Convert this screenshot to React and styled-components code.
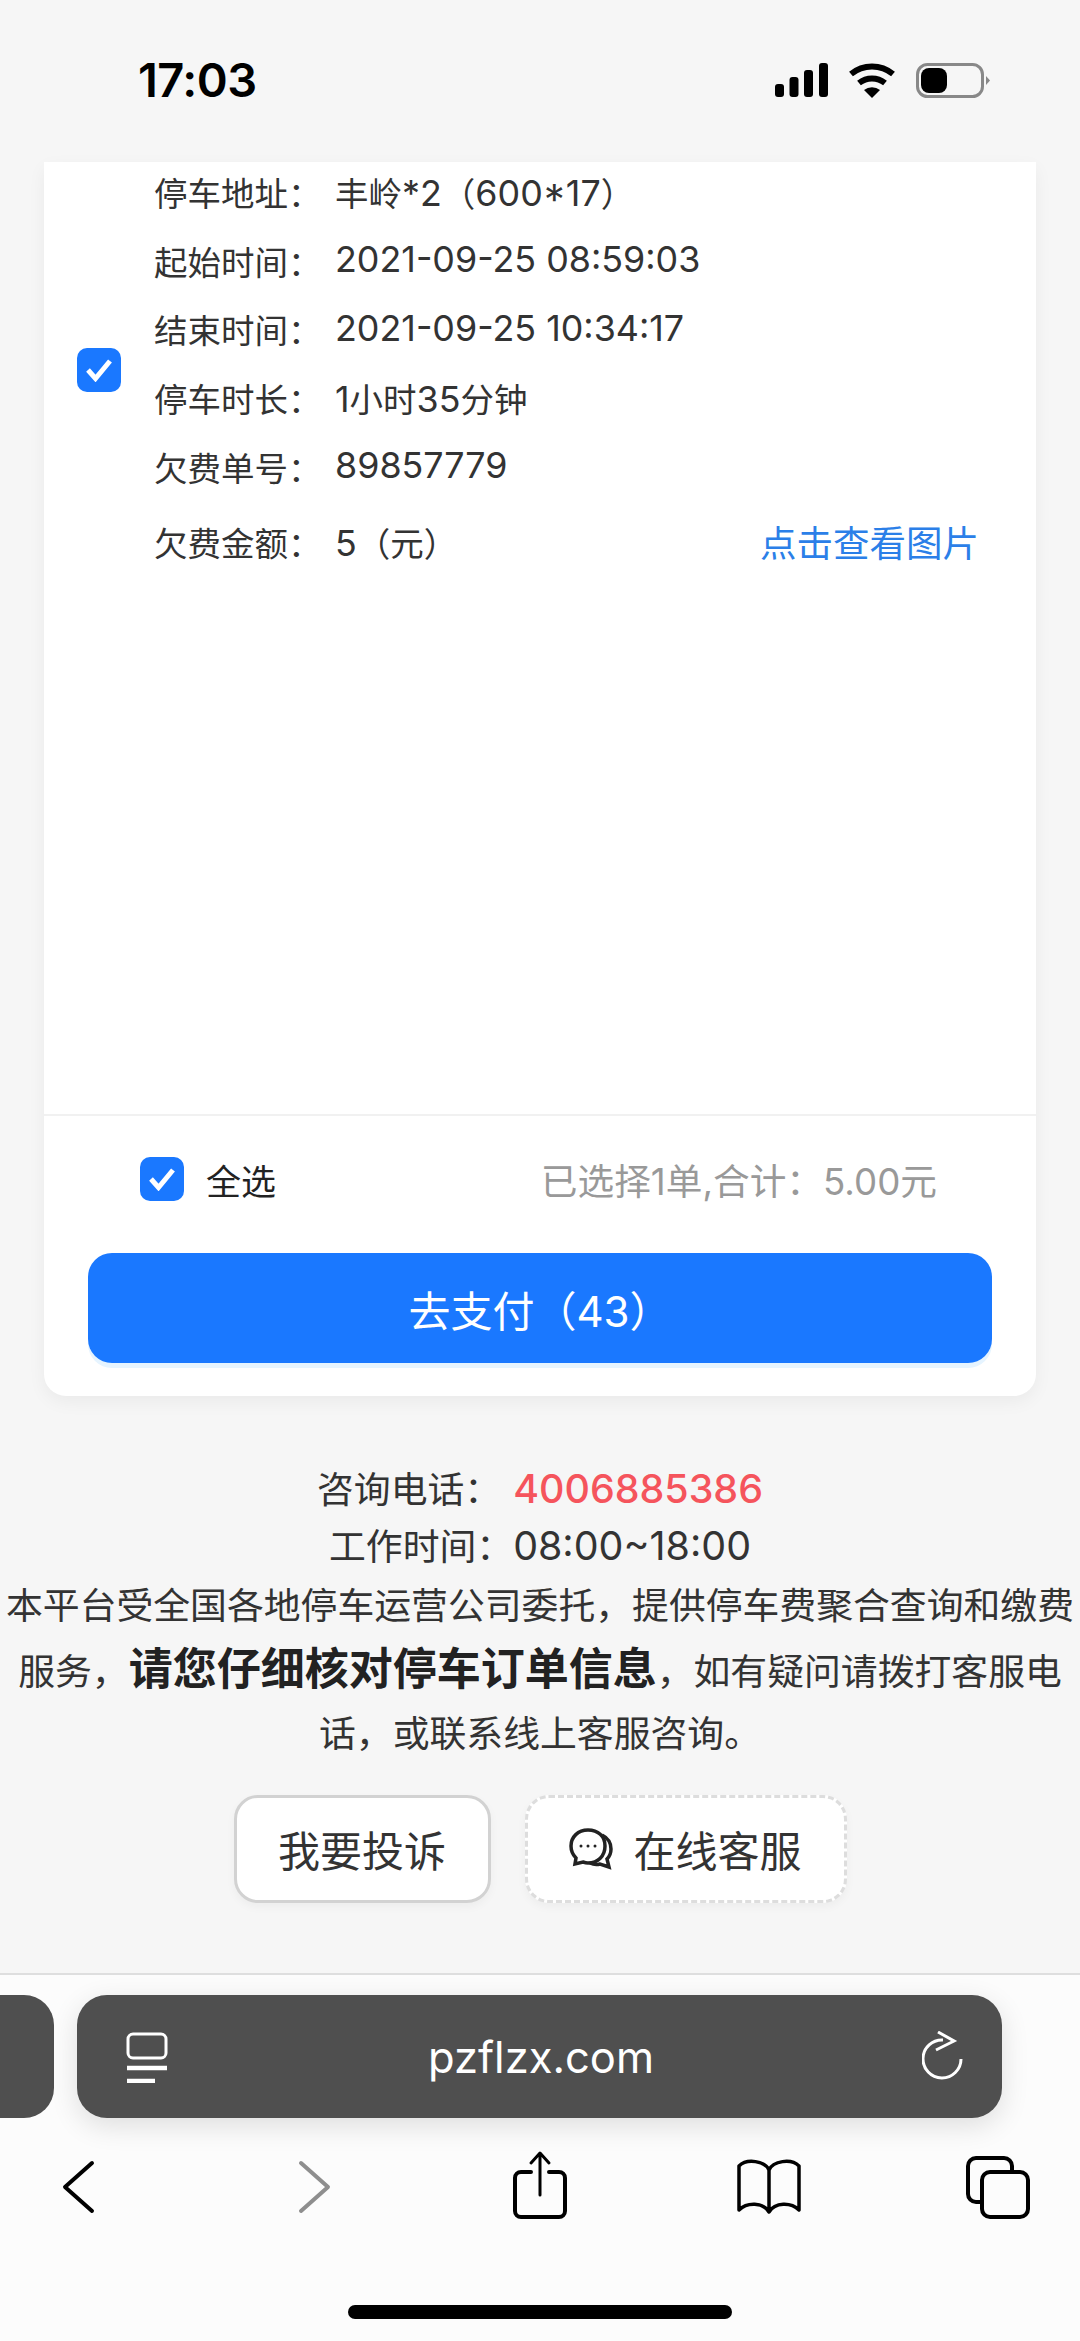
import styled, { createGlobalStyle } from "styled-components";

const GlobalStyle = createGlobalStyle`
  html, body {
    margin: 0;
    padding: 0;
    background: #f6f6f6;
    font-family: Inter, "Noto Sans CJK SC", "Liberation Sans", sans-serif;
  }
  * { box-sizing: border-box; }
`;

const Page = styled.div`
  width: 1080px;
  height: 2341px;
  display: flex;
  flex-direction: column;
  overflow: hidden;
  background: #f6f6f6;
  color: #333;
`;

const StatusBar = styled.div`
  height: 162px;
  flex: none;
  padding: 52px 88px 0 138px;
  display: flex;
  justify-content: space-between;
  align-items: flex-start;
`;

const Clock = styled.div`
  font-size: 47px;
  line-height: 56px;
  font-weight: 600;
  color: #000;
  letter-spacing: -0.5px;
`;

const StatusSvg = styled.svg`
  margin-top: 8px;
`;

const Card = styled.section`
  height: 1234px;
  flex: none;
  margin: 0 44px;
  padding-bottom: 33px;
  background: #fff;
  border-radius: 0 0 22px 22px;
  box-shadow: 0 6px 18px rgba(0, 0, 0, 0.05);
  display: flex;
  flex-direction: column;
`;

const Order = styled.div`
  flex: 1;
  display: flex;
  align-items: flex-start;
  padding-left: 33px;
  border-bottom: 2px solid #f1f1f1;
`;

const OrderBody = styled.div`
  flex: 1;
  display: flex;
  align-items: center;
  margin-top: -5px;
`;

const Details = styled.div`
  flex: 1;
  padding: 0 57px 0 33px;
`;

const Row = styled.div`
  display: flex;
  align-items: center;
  height: ${(p) => (p.$last ? 82 : 68.7)}px;
  font-size: 33.5px;
  color: #333;
`;

const Label = styled.span`
  width: 181px;
  flex: none;
`;

const Value = styled.span`
  flex: 1;
`;

// digits and latin run a bit larger than the chinese text around them
const Num = styled.span`
  font-size: 1.07em;
  line-height: 1;
`;

const Link = styled.a`
  font-size: 36.5px;
  color: #2b7fe8;
`;

const Box = styled.span`
  width: 44px;
  height: 44px;
  flex: none;
  border-radius: 10px;
  background: #1a78ff;
  display: flex;
  align-items: center;
  justify-content: center;
`;

const Summary = styled.div`
  height: 126px;
  flex: none;
  padding: 0 99px 0 96px;
  display: flex;
  align-items: center;
  gap: 22px;
`;

const AllLabel = styled.span`
  font-size: 35px;
  color: #222;
  flex: 1;
`;

const Total = styled.span`
  font-size: 36.7px;
  color: #999;
`;

const PayButton = styled.button`
  display: block;
  flex: none;
  width: 904px;
  height: 110px;
  margin: 11px auto 0;
  border: 0;
  border-radius: 24px;
  background: #1a78ff;
  box-shadow: 0 5px 0 #e6f4ff;
  color: #fff;
  font: inherit;
  font-size: 42px;
`;

const Info = styled.main`
  flex: 1;
  padding: 65px 5px 0;
  text-align: center;
  font-size: 36.85px;
  color: #333;
`;

const Contact = styled.div`
  line-height: 57px;
`;

const Phone = styled(Num)`
  color: #f5545c;
  font-weight: 500;
  margin-left: 12px;
`;

const Notice = styled.p`
  margin: 0;
  line-height: 62.5px;
`;

const Strong = styled.strong`
  font-size: 44px;
  font-weight: 700;
  color: #222;
`;

const Actions = styled.div`
  display: flex;
  justify-content: center;
  gap: 34px;
  margin-top: 29px;
`;

const ActionButton = styled.button`
  height: 108px;
  width: ${(p) => p.$width}px;
  display: flex;
  align-items: center;
  justify-content: center;
  gap: 20px;
  border-radius: 24px;
  background: #fff;
  border: 3px ${(p) => (p.$dashed ? "dashed #ddd" : "solid #d2d2d2")};
  box-shadow: 0 4px 10px rgba(0, 0, 0, 0.04);
  color: #333;
  font: inherit;
  font-size: 42px;
`;

const Browser = styled.footer`
  height: 368px;
  flex: none;
  background: #fcfcfc;
  border-top: 2px solid #dedede;
  position: relative;
`;

const Tabs = styled.div`
  display: flex;
  gap: 23px;
  margin: 20px 0 0 -40px;
`;

const TabStub = styled.div`
  width: 94px;
  height: 123px;
  background: #4f4f4f;
  border-radius: 30px;
`;

const AddressBar = styled.div`
  width: 925px;
  height: 123px;
  padding: 0 38px 0 49px;
  background: #4f4f4f;
  border-radius: 30px;
  box-shadow: 0 8px 28px rgba(0, 0, 0, 0.12);
  display: flex;
  align-items: center;
  justify-content: space-between;
`;

const Url = styled.span`
  font-size: 43.5px;
  color: #fff;
  margin-right: 8px;
`;

const Toolbar = styled.nav`
  display: grid;
  grid-template-columns: 237px 225px 229px 229px 64px;
  padding-left: 46px;
  margin-top: 32px;
`;

const HomeBar = styled.div`
  position: absolute;
  left: 348px;
  bottom: 22px;
  width: 384px;
  height: 14px;
  background: #000;
  border-radius: 7px;
`;

const Check = () => (
  <svg width="30" height="24" viewBox="0 0 30 24">
    <path d="M4 12l7.500 8.500L26 3" fill="none" stroke="#fff" strokeWidth="5" />
  </svg>
);

const StatusIcons = () => (
  <StatusSvg width="220" height="40" viewBox="772 60 220 40">
    <rect x="775" y="84" width="9" height="13" rx="3" />
    <rect x="789.5" y="77" width="9" height="20" rx="3" />
    <rect x="804" y="70" width="9" height="27" rx="3" />
    <rect x="819" y="63" width="9" height="34" rx="3" />
    <path d="M851 74a33 33 0 0 1 42 0" fill="none" stroke="#000" strokeWidth="6" />
    <path d="M859 83a21 21 0 0 1 26 0" fill="none" stroke="#000" strokeWidth="6" />
    <path d="M864 90a13 13 0 0 1 16 0l-8 8z" />
    <rect x="917.5" y="64.5" width="65" height="32" rx="10" fill="none" stroke="#888" strokeWidth="3" />
    <rect x="921" y="68" width="26" height="25" rx="8" />
    <path d="M986 76l4 4.500-4 4.500z" fill="#888" />
  </StatusSvg>
);

const ChatIcon = () => (
  <svg width="44" height="42" viewBox="0 0 44 42" fill="none" stroke="#222" strokeWidth="3.5">
    <path d="M19 2C9 2 2 9 2 18c0 5 2 9 5 12l-1 6 8-2c2 .7 3.500 1 5 1 10 0 17-7 17-17S29 2 19 2z" />
    <path d="M33 7c6 3 9 8 9 14 0 4-1 7-4 10l2 8-9-3c-3 1-7 .5-10-1" />
    <circle cx="12" cy="18" r="1.500" fill="#222" stroke="none" />
    <circle cx="19" cy="18" r="1.500" fill="#222" stroke="none" />
    <circle cx="26" cy="18" r="1.500" fill="#222" stroke="none" />
  </svg>
);

const PagesIcon = () => (
  <svg width="42" height="52" viewBox="0 0 42 52" fill="none" stroke="#fff" strokeWidth="3">
    <rect x="2" y="3" width="38" height="24" rx="5" />
    <path d="M1 37h40M1 50h28" strokeWidth="4.500" />
  </svg>
);

const ReloadIcon = () => (
  <svg width="42" height="52" viewBox="0 0 42 52" fill="none" stroke="#fff" strokeWidth="3">
    <path d="M21 9A19 19 0 1 0 39 28" />
    <path d="M16 1l16 9-18 9" />
  </svg>
);

const ToolIcon = ({ children, color = "#000", width = 4 }) => (
  <svg width="64" height="70" viewBox="0 0 64 70" fill="none" stroke={color} strokeWidth={width} strokeLinecap="round" strokeLinejoin="round">
    {children}
  </svg>
);

const rows = [
  ["停车地址：", "丰岭*2（600*17）"],
  ["起始时间：", "2021-09-25 08:59:03"],
  ["结束时间：", "2021-09-25 10:34:17"],
  ["停车时长：", "1小时35分钟"],
  ["欠费单号：", "89857779"],
];

// wraps the latin runs of a mixed string in Num
const mixed = (text) =>
  text.split(/([0-9:*~ -]+)/).map((part, i) => (i % 2 ? <Num key={i}>{part}</Num> : part));

const App = () => {
  return (
    <Page>
      <GlobalStyle />
      <StatusBar>
        <Clock>17:03</Clock>
        <StatusIcons />
      </StatusBar>
      <Card>
        <Order>
          <OrderBody>
            <Box><Check /></Box>
            <Details>
              {rows.map(([label, value]) => (
                <Row key={label}>
                  <Label>{label}</Label>
                  <Value>{mixed(value)}</Value>
                </Row>
              ))}
              <Row $last>
                <Label>欠费金额：</Label>
                <Value>{mixed("5（元）")}</Value>
                <Link>点击查看图片</Link>
              </Row>
            </Details>
          </OrderBody>
        </Order>
        <Summary>
          <Box><Check /></Box>
          <AllLabel>全选</AllLabel>
          <Total>已选择1单,合计：5.00元</Total>
        </Summary>
        <PayButton>去支付（43）</PayButton>
      </Card>
      <Info>
        <Contact>咨询电话：<Phone>4006885386</Phone></Contact>
        <Contact>工作时间：<Num>08:00~18:00</Num></Contact>
        <Notice>
          本平台受全国各地停车运营公司委托，提供停车费聚合查询和缴费服务，<Strong>请您仔细核对停车订单信息</Strong>，如有疑问请拨打客服电话，或联系线上客服咨询。
        </Notice>
        <Actions>
          <ActionButton $width={257}>我要投诉</ActionButton>
          <ActionButton $width={322} $dashed><ChatIcon />在线客服</ActionButton>
        </Actions>
      </Info>
      <Browser>
        <Tabs>
          <TabStub />
          <AddressBar>
            <PagesIcon />
            <Url>pzflzx.com</Url>
            <ReloadIcon />
          </AddressBar>
        </Tabs>
        <Toolbar>
          <ToolIcon>
            <path d="M46 13L19 37l27 24" />
          </ToolIcon>
          <ToolIcon color="#8e8e8e">
            <path d="M18 13l27 24-27 24" />
          </ToolIcon>
          <ToolIcon>
            <path d="M23 22H13a6 6 0 0 0-6 6v33a6 6 0 0 0 6 6h38a6 6 0 0 0 6-6V28a6 6 0 0 0-6-6H41" />
            <path d="M32 45V4M23 13l9-10 9 10" strokeWidth="3" />
          </ToolIcon>
          <ToolIcon>
            <path d="M32 20C28 11 10 8 2 16v44c8-8 24-8 30 2 6-10 22-10 30-2V16c-8-8-26-5-30 4zM32 20v42" strokeWidth="3.500" />
          </ToolIcon>
          <ToolIcon>
            <path d="M16 52h-6a8 8 0 0 1-8-8V16a8 8 0 0 1 8-8h28a8 8 0 0 1 8 8v6" />
            <rect x="16" y="22" width="46" height="45" rx="8" />
          </ToolIcon>
        </Toolbar>
        <HomeBar />
      </Browser>
    </Page>
  );
};

export default App;
